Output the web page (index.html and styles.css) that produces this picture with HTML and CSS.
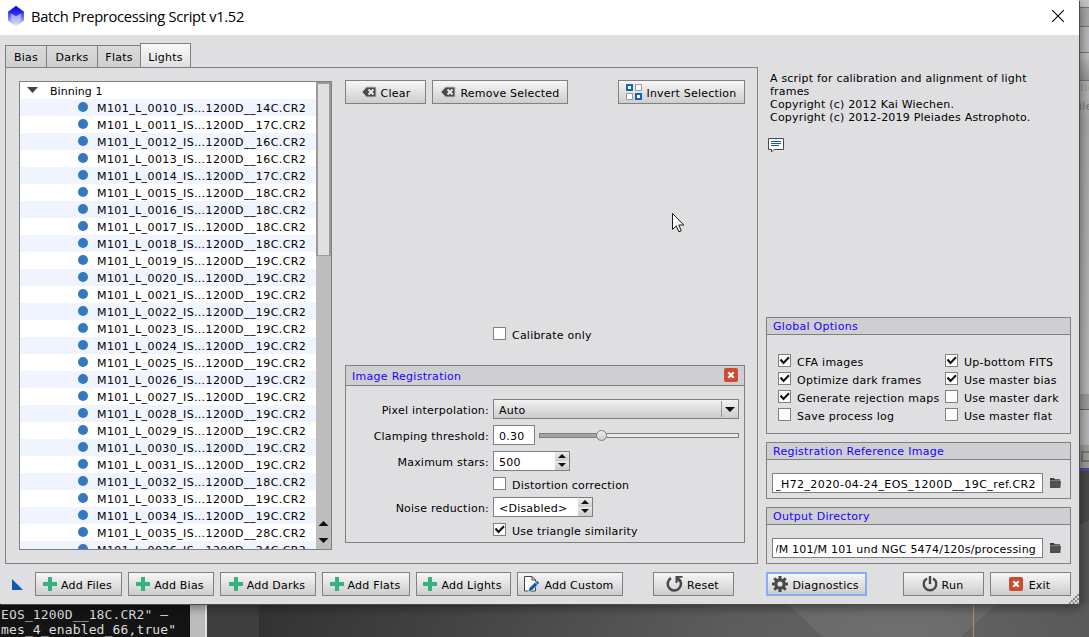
FILE: index.html
```html
<!DOCTYPE html>
<html lang="en">
<head>
  <meta charset="UTF-8">
  <title>Batch Preprocessing Script v1.52</title>
  <link rel="stylesheet" href="styles.css">
</head>
<body>
  <svg class="defs" width="0" height="0">
    <symbol id="i-plus" viewBox="0 0 14 14"><path d="M5 0h4v5h5v4H9v5H5V9H0V5h5z" fill="#35b27d"/></symbol>
    <symbol id="i-back" viewBox="0 0 16 12"><path d="M5.500 1H15v10H5.500L1 6z" fill="#4a4a4a" stroke="#c4c4c4"/><path d="M7.500 3.500l5 5M12.500 3.500l-5 5" stroke="#eee" stroke-width="1.900"/></symbol>
    <symbol id="i-x" viewBox="0 0 14 14"><rect width="14" height="14" rx="2" fill="#cf4a33"/><path d="M4.300 4.300l5.400 5.400M9.700 4.300L4.300 9.700" stroke="#fff" stroke-width="2.200"/></symbol>
    <symbol id="i-folder" viewBox="0 0 11 10"><path d="M0 0h4l1 1.200h5V3H0z" fill="#3c3c3c"/><path d="M0 3h11l-.6 7H0z" fill="#505050"/><path d="M0 2.600h10.500" stroke="#aaa" stroke-width=".6"/></symbol>
    <symbol id="i-check" viewBox="0 0 11 11"><path d="M1.500 4.500L4.500 8L10 2.200" fill="none" stroke="#111" stroke-width="2.100"/></symbol>
  </svg>

  <div class="backdrop">
    <div class="console">
      <pre>EOS_1200D__18C.CR2" –
mes_4_enabled_66,true"</pre>
    </div>
    <div class="console-bar"></div>
    <svg class="workspace" width="882" height="33" viewBox="0 0 882 33"><path d="M581 0h208L754 33H616z" fill="#fff" fill-opacity=".07"/><path d="M766.500 0v33" stroke="#b78d65"/></svg>
    <div class="side">
      <div class="side-row r1"></div>
      <div class="side-row r2"></div>
      <div class="side-row r3"></div>
      <div class="side-row r4">or</div>
      <div class="side-row r5">tic</div>
      <div class="side-row r6">ile</div>
      <div class="side-row r7"></div>
      <div class="side-row r8"></div>
      <div class="side-row r9"><span></span></div>
      <div class="side-row r10"></div>
    </div>
  </div>

  <div class="window">
    <div class="titlebar">
      <svg class="app-icon" width="16" height="20" viewBox="0 0 16 20">
        <defs><linearGradient id="g" x1="0" y1="0" x2="0" y2="1"><stop offset="0" stop-color="#1616f4"/><stop offset=".5" stop-color="#5c64f4"/><stop offset="1" stop-color="#dce0fa"/></linearGradient>
        <linearGradient id="k" x1="0" y1="0" x2="0" y2="1"><stop offset="0" stop-color="#0404d8"/><stop offset="1" stop-color="#3c3cff"/></linearGradient></defs>
        <path d="M8 0l8 6v8.500L8 20l-8-5.500V6z" fill="url(#g)"/>
        <path d="M8 0l8 6-8 4.500L0 6z" fill="url(#k)"/>
        <path d="M8 10l5-2.500v7L8 20l-5-5.500v-7z" fill="#dfe2f8" fill-opacity=".55"/>
      </svg>
      <span class="title">Batch Preprocessing Script v1.52</span>
      <svg class="close" width="12" height="12" viewBox="0 0 12 12"><path d="M0 0l12 12M12 0L0 12" stroke="#000" stroke-width="1.100"/></svg>
    </div>

    <div class="content">
      <div class="left">
        <div class="tabs">
          <div class="tab t-bias">Bias</div>
          <div class="tab t-darks">Darks</div>
          <div class="tab t-flats">Flats</div>
          <div class="tab t-lights active">Lights</div>
        </div>
        <div class="page">
          <div class="tree">
            <div class="rows">
              <div class="row root"><i class="arrow"></i>Binning 1</div>
              <div class="row">M101_L_0010_IS…1200D__14C.CR2</div>
              <div class="row">M101_L_0011_IS…1200D__17C.CR2</div>
              <div class="row">M101_L_0012_IS…1200D__16C.CR2</div>
              <div class="row">M101_L_0013_IS…1200D__16C.CR2</div>
              <div class="row">M101_L_0014_IS…1200D__17C.CR2</div>
              <div class="row">M101_L_0015_IS…1200D__18C.CR2</div>
              <div class="row">M101_L_0016_IS…1200D__18C.CR2</div>
              <div class="row">M101_L_0017_IS…1200D__18C.CR2</div>
              <div class="row">M101_L_0018_IS…1200D__18C.CR2</div>
              <div class="row">M101_L_0019_IS…1200D__19C.CR2</div>
              <div class="row">M101_L_0020_IS…1200D__19C.CR2</div>
              <div class="row">M101_L_0021_IS…1200D__19C.CR2</div>
              <div class="row">M101_L_0022_IS…1200D__19C.CR2</div>
              <div class="row">M101_L_0023_IS…1200D__19C.CR2</div>
              <div class="row">M101_L_0024_IS…1200D__19C.CR2</div>
              <div class="row">M101_L_0025_IS…1200D__19C.CR2</div>
              <div class="row">M101_L_0026_IS…1200D__19C.CR2</div>
              <div class="row">M101_L_0027_IS…1200D__19C.CR2</div>
              <div class="row">M101_L_0028_IS…1200D__19C.CR2</div>
              <div class="row">M101_L_0029_IS…1200D__19C.CR2</div>
              <div class="row">M101_L_0030_IS…1200D__19C.CR2</div>
              <div class="row">M101_L_0031_IS…1200D__19C.CR2</div>
              <div class="row">M101_L_0032_IS…1200D__18C.CR2</div>
              <div class="row">M101_L_0033_IS…1200D__19C.CR2</div>
              <div class="row">M101_L_0034_IS…1200D__19C.CR2</div>
              <div class="row">M101_L_0035_IS…1200D__28C.CR2</div>
              <div class="row">M101_L_0036_IS…1200D__24C.CR2</div>
            </div>
            <div class="scrollbar">
              <div class="handle"></div>
              <div class="scroll-btns"><i class="up"></i><i class="down"></i></div>
            </div>
          </div>

          <div class="middle">
            <div class="toolbar">
              <div class="btn b-clear"><svg width="16" height="12"><use href="#i-back"/></svg>Clear</div>
              <div class="btn b-remove"><svg width="16" height="12"><use href="#i-back"/></svg>Remove Selected</div>
              <div class="btn b-invert">
                <svg width="16" height="16" viewBox="0 0 16 16"><path d="M1 1h5v5H1zM10 10h5v5h-5z" fill="#fff" stroke="#1464b8" stroke-width="2"/><path d="M9.500 .5h6v6h-6zM.5 9.500h6v6h-6z" fill="#fff" stroke="#999"/></svg>Invert Selection</div>
            </div>
            <div class="check calibrate"><span class="box"></span>Calibrate only</div>
            <div class="group registration">
              <div class="group-title"><span>Image Registration</span><svg width="14" height="14"><use href="#i-x"/></svg></div>
              <div class="form">
                <div class="field"><label>Pixel interpolation:</label>
                  <div class="combo"><span>Auto</span><b><i class="down"></i></b></div>
                </div>
                <div class="field"><label>Clamping threshold:</label>
                  <div class="input num">0.30</div>
                  <div class="slider"><div class="fill"></div><div class="knob"></div></div>
                </div>
                <div class="field"><label>Maximum stars:</label>
                  <div class="spin stars"><span>500</span><b><i class="up"></i><i class="down"></i></b></div>
                </div>
                <div class="field check-row"><label></label><div class="check"><span class="box"></span>Distortion correction</div></div>
                <div class="field"><label>Noise reduction:</label>
                  <div class="spin noise"><span>&lt;Disabled&gt;</span><b><i class="up"></i><i class="down"></i></b></div>
                </div>
                <div class="field check-row"><label></label><div class="check"><span class="box"><svg width="11" height="11"><use href="#i-check"/></svg></span>Use triangle similarity</div></div>
              </div>
            </div>
          </div>
        </div>
      </div>

      <div class="right">
        <div class="about">
          A script for calibration and alignment of light<br>
          frames<br>
          Copyright (c) 2012 Kai Wiechen.<br>
          Copyright (c) 2012-2019 Pleiades Astrophoto.
        </div>
        <svg class="comment" width="16" height="15" viewBox="0 0 16 15"><path d="M.5 .5h15v11H6L3.500 14v-2.500h-3z" fill="#fff" stroke="#484848"/><path d="M3 3.500h10M3 5.500h10M3 7.500h8" stroke="#1464b8"/></svg>

        <div class="group options">
          <div class="group-title">Global Options</div>
          <div class="option-cols">
            <div class="option-col">
              <div class="check"><span class="box"><svg width="11" height="11"><use href="#i-check"/></svg></span>CFA images</div>
              <div class="check"><span class="box"><svg width="11" height="11"><use href="#i-check"/></svg></span>Optimize dark frames</div>
              <div class="check"><span class="box"><svg width="11" height="11"><use href="#i-check"/></svg></span>Generate rejection maps</div>
              <div class="check"><span class="box"></span>Save process log</div>
            </div>
            <div class="option-col">
              <div class="check"><span class="box"><svg width="11" height="11"><use href="#i-check"/></svg></span>Up-bottom FITS</div>
              <div class="check"><span class="box"><svg width="11" height="11"><use href="#i-check"/></svg></span>Use master bias</div>
              <div class="check"><span class="box"></span>Use master dark</div>
              <div class="check"><span class="box"></span>Use master flat</div>
            </div>
          </div>
        </div>
        <div class="group path">
          <div class="group-title">Registration Reference Image</div>
          <div class="path-row"><div class="input"><span class="clip ref"><span>_H72_2020-04-24_EOS_1200D__19C_ref.CR2</span></span></div><svg width="11" height="10"><use href="#i-folder"/></svg></div>
        </div>
        <div class="group path">
          <div class="group-title">Output Directory</div>
          <div class="path-row"><div class="input"><span class="clip out"><span>/M 101/M 101 und NGC 5474/120s/processing</span></span></div><svg width="11" height="10"><use href="#i-folder"/></svg></div>
        </div>
      </div>
    </div>

    <div class="footer">
      <i class="instance"></i>
      <div class="btn b-files"><svg width="14" height="14"><use href="#i-plus"/></svg>Add Files</div>
      <div class="btn b-bias"><svg width="14" height="14"><use href="#i-plus"/></svg>Add Bias</div>
      <div class="btn b-darks"><svg width="14" height="14"><use href="#i-plus"/></svg>Add Darks</div>
      <div class="btn b-flats"><svg width="14" height="14"><use href="#i-plus"/></svg>Add Flats</div>
      <div class="btn b-lights"><svg width="14" height="14"><use href="#i-plus"/></svg>Add Lights</div>
      <div class="btn b-custom"><svg width="16" height="16" viewBox="0 0 16 16"><path d="M.5 .5H8L11.500 4v11H.5z" fill="#fff" stroke="#444"/><path d="M8 .5V4h3.500" fill="none" stroke="#444"/><path d="M13 4.500l2.500 2.500-7.500 7.500-4 1.500 1.200-4z" fill="#0c55b5" stroke="#eee" stroke-width=".7"/><path d="M11 6.200l3 3" stroke="#eee" stroke-width=".8"/></svg>Add Custom</div>
      <div class="btn b-reset"><svg width="17" height="16" viewBox="0 0 17 16"><path d="M5 2.200A6.600 6.600 0 1 0 13 3.200" fill="none" stroke="#484848" stroke-width="2.500"/><path d="M9.500 0h7v1.800h-3.500l2 3-2 1.200-1.500-1.500V7h-2z" fill="#484848"/></svg>Reset</div>
      <div class="btn b-diag"><svg width="16" height="16" viewBox="0 0 16 16"><circle cx="8" cy="8" r="4.200" fill="none" stroke="#484848" stroke-width="3.200"/><path d="M8 0v3M8 13v3M0 8h3M13 8h3M2.300 2.300l2.200 2.200M11.500 11.500l2.200 2.200M2.300 13.700l2.200-2.200M11.500 4.500l2.200-2.200" stroke="#484848" stroke-width="3"/></svg>Diagnostics</div>
      <div class="btn b-run"><svg width="16" height="16" viewBox="0 0 16 16"><path d="M5 2.400a6.300 6.300 0 1 0 6 0" fill="none" stroke="#484848" stroke-width="2.300"/><path d="M8 0v8" stroke="#484848" stroke-width="2.400"/></svg>Run</div>
      <div class="btn b-exit"><svg width="14" height="14"><use href="#i-x"/></svg>Exit</div>
    </div>
    <svg class="grip" width="10" height="10" viewBox="0 0 10 10"><path d="M0 10L10 0M4 10l6-6M8 10l2-2" stroke="#777" stroke-width="1.800" stroke-dasharray="2 1"/></svg>
  </div>

  <svg class="cursor" width="13" height="20" viewBox="0 0 13 20"><path d="M.5 .5v16l3.800-3.600 2.500 5.900 2.500-1-2.500-5.800h5z" fill="#fff" stroke="#1a1a1a"/></svg>
</body>
</html>
```
FILE: styles.css
```css
* {
  box-sizing: border-box;
}

body {
  margin: 0;
  width: 1089px;
  height: 637px;
  overflow: hidden;
  position: relative;
  background: #4a4a4a;
  font-family: Verdana, "DejaVu Sans", sans-serif;
  font-size: 11px;
  line-height: 13px;
  letter-spacing: 0.22px;
  color: #000;
}

svg {
  display: block;
  flex: none;
}

.defs {
  position: absolute;
}

/* what shows behind the dialog */
.backdrop {
  position: absolute;
  inset: 0;
}

.console {
  position: absolute;
  left: 0;
  top: 604px;
  width: 190px;
  height: 33px;
  overflow: hidden;
  background: #141414;
}

.console pre {
  margin: 3px 0 0 1px;
  font: 13px/15px "DejaVu Sans Mono", monospace;
  letter-spacing: 0.14px;
  color: #dcdcdc;
}

.console-bar {
  position: absolute;
  left: 190px;
  top: 604px;
  width: 17px;
  height: 33px;
  background: #bcbcbc;
  border-right: 2px solid #e4e4e4;
}

.workspace {
  position: absolute;
  left: 207px;
  top: 604px;
  background: linear-gradient(90deg, #3e3e3e 52px, #333 52px, #3e3e3e 180px, #5c5c5c 520px, #646464 700px, #5a5a5a);
}

.side {
  position: absolute;
  left: 1079px;
  top: 0;
  width: 10px;
  height: 604px;
  overflow: hidden;
  color: #c8c8c8;
}

.r1 { height: 8px; background: #c5c5c7; border-bottom: 1px solid #777; }
.r2 { height: 19px; background: #a9a9a9; border-bottom: 1px solid #777; }
.r3 { height: 26px; background: #b9b9bb; border-bottom: 1px solid #777; }
.r4 { height: 28px; padding-left: 2px; line-height: 6px; background: linear-gradient(#c0c0c0, #969696); border-bottom: 1px solid #777; }
.r5 { height: 19px; padding-left: 1px; background: #b2b2b2; color: #999; }
.r6 { height: 294px; background: linear-gradient(#b2b2b2, #a7a7a7 20px, #b8b8b8); color: #777; }
.r7 { height: 16px; background: #9d9d9d; border-bottom: 1px solid #666; }
.r8 { height: 35px; background: #b7b7b9; }
.r9 { height: 26px; background: #a09f96; border-bottom: 3px solid #46509a; padding: 6px 0 0 2px; }
.r9 span { display: block; width: 12px; height: 11px; border: 2px solid #777; }
.r10 { height: 150px; background: linear-gradient(150deg, #4a4a4a 35%, #565656 35%); }

.window {
  position: absolute;
  left: 0;
  top: 0;
  width: 1079px;
  height: 604px;
  background: #dfdfe1;
  box-shadow: 1px 1px 0 #4b4b4b, 2px 3px 10px rgba(0, 0, 0, 0.45);
}

.titlebar {
  display: flex;
  align-items: center;
  height: 35px;
  padding: 0 15px 3px 8px;
  background: #fff;
}

.title {
  flex: 1;
  margin-left: 7px;
  font: 14.7px/20px "Segoe UI", "Open Sans", sans-serif;
  letter-spacing: -0.3px;
}

.content {
  display: flex;
  gap: 8px;
  height: 529px;
  padding: 8px 8px 0 5px;
}

.left {
  width: 753px;
}

.tabs {
  display: flex;
  align-items: flex-end;
  height: 25px;
}

.tab {
  height: 23px;
  margin-right: -1px;
  padding-top: 5px;
  border: 1px solid #808080;
  background: linear-gradient(#dadadb, #cfcfcf);
  text-align: center;
}

.tab.active {
  height: 25px;
  padding-top: 7px;
  background: linear-gradient(#fafafa, #dfdfe1);
}

.t-bias { width: 42px; }
.t-darks { width: 52px; }
.t-flats { width: 44px; }
.t-lights { width: 51px; }

.page {
  display: flex;
  gap: 13px;
  height: 497px;
  margin-top: -1px;
  padding: 13px 12px 0 13px;
  border: 1px solid #808080;
}

.tree {
  display: flex;
  width: 313px;
  height: 469px;
  border: 1px solid #808080;
  background: #fff;
  overflow: hidden;
}

.rows {
  flex: 1;
}

.row {
  position: relative;
  height: 17px;
  padding: 1px 0 0 77px;
  line-height: 17px;
  letter-spacing: 0.41px;
  white-space: nowrap;
}

.row:nth-child(even) {
  background: #eff4ff;
}

.row::before {
  content: "";
  position: absolute;
  left: 58px;
  top: 3px;
  width: 10px;
  height: 10px;
  border-radius: 50%;
  background: #3478c0;
}

.row.root {
  display: flex;
  padding-left: 7px;
  letter-spacing: 0.05px;
}

.row.root::before {
  display: none;
}

.arrow {
  width: 11px;
  margin: 4px 12px 0 0;
  height: 6px;
  background: #444;
  clip-path: polygon(0 0, 100% 0, 50% 100%);
}

.scrollbar {
  display: flex;
  flex-direction: column;
  justify-content: space-between;
  width: 15px;
  background: #bdbdbd;
}

.handle {
  height: 174px;
  border: solid #9a9a9a;
  border-width: 2px 2px 1px 2px;
  background: #e0e0e0;
}

.scroll-btns {
  display: flex;
  flex-direction: column;
  align-items: center;
  gap: 12px;
  padding-bottom: 6px;
}

.up,
.down {
  display: block;
  width: 10px;
  height: 5px;
  background: #111;
}

.up {
  clip-path: polygon(50% 0, 100% 100%, 0 100%);
}

.down {
  clip-path: polygon(0 0, 100% 0, 50% 100%);
}

.middle {
  width: 400px;
}

.toolbar {
  display: flex;
  gap: 6px;
  margin-top: -1px;
}

.btn {
  display: flex;
  align-items: center;
  justify-content: center;
  gap: 4px;
  height: 24px;
  padding-top: 2px;
  border: 1px solid #808080;
  background: linear-gradient(#f6f6f6, #cdcdcd);
  white-space: nowrap;
}

.btn svg {
  margin-top: -3px;
}

.b-clear { width: 81px; }
.b-remove { width: 136px; }
.b-invert { width: 127px; margin-left: auto; }

.check {
  display: flex;
  align-items: flex-start;
  gap: 6px;
  height: 18px;
  line-height: 17px;
  white-space: nowrap;
}

.box {
  flex: none;
  width: 13px;
  height: 13px;
  border: 1px solid #808080;
  background: #fff;
}

.calibrate {
  margin: 223px 0 20px 148px;
}

.group {
  border: 1px solid #808080;
}

.group-title {
  height: 17px;
  padding: 2px 6px 0;
  border-bottom: 1px solid #808080;
  background: #cfcfd1;
  color: #1a00ff;
  letter-spacing: 0.28px;
}

.registration {
  height: 178px;
}

.registration .group-title {
  display: flex;
  justify-content: space-between;
  height: 20px;
  padding-top: 4px;
}

.registration .group-title svg {
  margin-top: -2px;
}

.form {
  padding: 13px 5px 0 0;
}

.field {
  display: flex;
  height: 20px;
  margin-bottom: 6px;
}

.field label {
  width: 143px;
  margin-right: 4px;
  padding-top: 5px;
  text-align: right;
}

.field.check-row {
  height: 14px;
}

.combo {
  flex: 1;
  display: flex;
  justify-content: space-between;
  padding: 0 0 0 5px;
  border: 1px solid #808080;
  background: linear-gradient(#f2f2f2, #cbcbcb);
  line-height: 21px;
}

.combo b {
  width: 17px;
  margin: 1px 0;
  padding: 6px 0 0 3px;
  border-left: 1px solid #999;
}

.input {
  height: 20px;
  border: 1px solid #808080;
  background: #fff;
  line-height: 21px;
  white-space: nowrap;
}

.num {
  width: 42px;
  padding-left: 5px;
}

.slider {
  position: relative;
  flex: 1;
  height: 5px;
  margin: 8px 0 0 4px;
  border: 1px solid #808080;
  background: #ebebeb;
}

.fill {
  width: 60px;
  height: 3px;
  background: #a2a2a2;
}

.knob {
  position: absolute;
  left: 56px;
  top: -4px;
  width: 11px;
  height: 11px;
  border: 1px solid #808080;
  border-radius: 50%;
  background: linear-gradient(#eee, #ccc);
}

.spin {
  display: flex;
  justify-content: space-between;
  padding-left: 5px;
  border: 1px solid #808080;
  background: #fff;
  line-height: 21px;
}

.spin b {
  display: flex;
  flex-direction: column;
  justify-content: space-between;
  align-items: center;
  width: 14px;
  padding: 2px 0 3px;
  background: linear-gradient(#eee, #ccc 50%, #e8e8e8 50%, #ccc);
}

.spin .up,
.spin .down {
  width: 8px;
  height: 4px;
}

.stars { width: 77px; }
.noise { width: 100px; }

.right {
  display: flex;
  flex-direction: column;
  width: 305px;
}

.about {
  margin: 29px 0 14px 4px;
  letter-spacing: 0.2px;
  white-space: nowrap;
}

.comment {
  margin: 0 0 auto 2px;
}

.right .group {
  margin-bottom: 8px;
}

.right .group:last-child {
  margin-bottom: 0;
}

.options {
  height: 117px;
}

.option-cols {
  display: flex;
  padding: 19px 0 0 11px;
}

.option-col {
  width: 167px;
  flex: none;
  letter-spacing: 0.26px;
}

.path {
  height: 57px;
}

.path-row {
  display: flex;
  align-items: center;
  gap: 7px;
  padding: 13px 0 0 5px;
}

.path .input {
  width: 271px;
  padding: 0 6px 0 3px;
}

.clip {
  display: flex;
  justify-content: flex-end;
  overflow: hidden;
}

.ref { letter-spacing: 0.41px; }
.out { letter-spacing: 0.21px; }

.footer {
  display: flex;
  gap: 6px;
  padding: 8px 8px 0 12px;
}

.instance {
  width: 11px;
  height: 11px;
  margin: 7px 6px 0 0;
  background: #0c5ab8;
  clip-path: polygon(0 0, 100% 100%, 0 100%);
}

.b-files { width: 87px; }
.b-bias { width: 86px; }
.b-darks { width: 96px; }
.b-flats { width: 88px; }
.b-lights { width: 95px; }
.b-custom { width: 106px; }
.b-reset { width: 81px; margin-left: 24px; }
.b-diag { width: 101px; margin-left: 26px; border: 2px solid #86acf8; }
.b-run { width: 81px; margin-left: 30px; }
.b-exit { width: 81px; gap: 6px; }

.footer .btn {
  padding-right: 2px;
}

.grip {
  position: absolute;
  right: 0;
  bottom: 0;
}

.cursor {
  position: absolute;
  left: 672px;
  top: 213px;
}
```
